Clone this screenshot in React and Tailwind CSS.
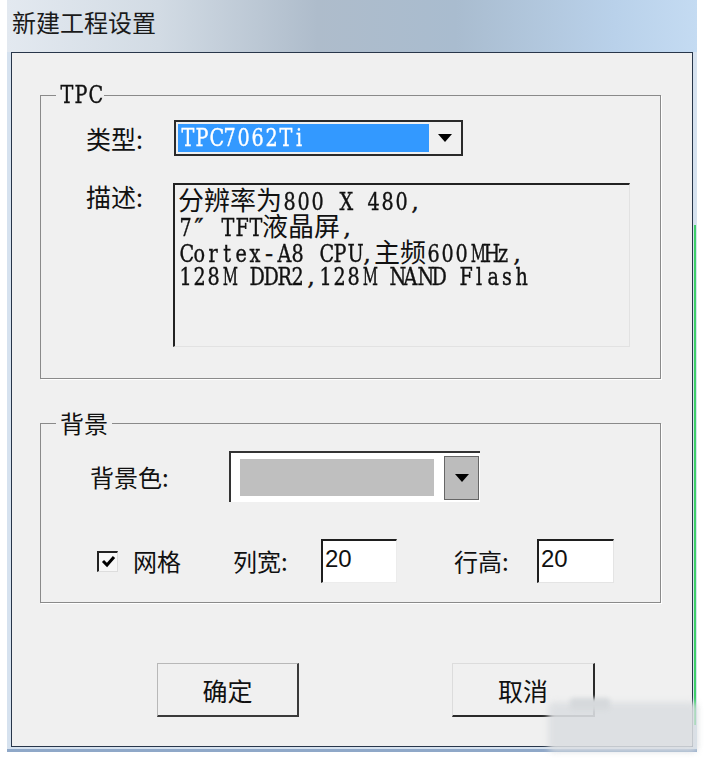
function Mono({ text }) {
  return text.split('').map((c, i) => {
    let cls = "inline-block w-[14px] text-center";
    if (c === 'M' || c === 'W' || c === 'm' || c === 'w') cls = "inline-block w-[14px] text-center scale-x-[0.62]";
    else if (/[A-Za-z0-9]/.test(c)) cls = "inline-block w-[14px] text-center scale-x-[0.8]";
    return (
      <span key={i} className={cls}>
        {c === ' ' ? '\u00a0' : c}
      </span>
    );
  });
}

function Cjk({ children }) {
  return <span className="text-[26px] leading-[26px] font-['Noto_Sans_CJK_SC'] [-webkit-text-stroke:0px]">{children}</span>;
}

export default function App() {
  const Tri = () => (
    <svg width="14" height="8" viewBox="0 0 14 8">
      <polygon points="0,0 14,0 7,8" fill="#000" />
    </svg>
  );
  return (
    <div className="w-[704px] h-[758px] bg-white relative overflow-hidden font-['Noto_Sans_CJK_SC'] text-[#111]">
      <div className="ml-[7px] w-[690px] h-[752px] bg-[#d6e2ef] flex flex-col border-b-[3px] border-[#8fa8c8]">
        <div className="h-[52px] shrink-0 pl-[5px] pt-[6px] bg-[linear-gradient(90deg,#e3e9f0_0%,#d2dbe4_22%,#aebccb_45%,#a9bccf_65%,#b9d1ea_88%,#c4dbf2_100%)]">
          <div className="text-[24px] leading-[32px] text-[#1a1a1a]">新建工程设置</div>
        </div>
        <div className="ml-[4px] w-[682px] h-[695px] shrink-0 border border-[#28364a] bg-[#f0f0f0] flex flex-col">
          {/* TPC group */}
          <fieldset className="ml-[28px] mt-[30px] w-[621px] border border-[#8a8a8a] p-0 m-0 shadow-[1px_1px_0_#fff]">
            <legend className="ml-[15px] px-[3px] leading-[24px] text-[24px] font-['DejaVu_Serif'] [-webkit-text-stroke:0.4px_#111]"><Mono text="TPC" /></legend>
            <div className="pl-[45px] pt-[13px] pb-[31px] flex flex-col">
              <div className="flex items-center">
                <div className="w-[88px] text-[25px] leading-[30px]">类型:</div>
                <div className="w-[289px] h-[36px] border-2 border-[#2a2a2a] bg-[#f0f0f0] p-[2px] flex gap-[1px]">
                  <div className="flex-1 bg-[#3399ff] text-white pl-[2px] flex items-center text-[24px] font-['DejaVu_Serif'] leading-[28px] [-webkit-text-stroke:0.4px_#fff]">
                    <div><Mono text="TPC7062Ti" /></div>
                  </div>
                  <div className="w-[29px] flex items-center justify-center"><Tri /></div>
                </div>
              </div>
              <div className="mt-[27px] flex items-start">
                <div className="w-[87px] text-[25px] leading-[26px]">描述:</div>
                <div className="w-[457px] h-[164px] border-t-2 border-l-2 border-r border-b border-t-[#222] border-l-[#222] border-r-[#e2e2e2] border-b-[#e2e2e2] bg-[#f0f0f0] pl-[3px] pt-[1px] font-['DejaVu_Serif'] text-[24px] leading-[26px] text-[#111] [-webkit-text-stroke:0.4px_#111]">
                  <div className="h-[26px] whitespace-nowrap"><Cjk>分辨率为</Cjk><Mono text="800 X 480," /></div>
                  <div className="h-[26px] whitespace-nowrap"><Mono text="7″ TFT" /><Cjk>液晶屏</Cjk><Mono text="," /></div>
                  <div className="h-[26px] whitespace-nowrap"><Mono text="Cortex-A8 CPU," /><Cjk>主频</Cjk><Mono text="600MHz," /></div>
                  <div className="h-[26px] whitespace-nowrap"><Mono text="128M DDR2,128M NAND Flash" /></div>
                </div>
              </div>
            </div>
          </fieldset>

          {/* 背景 group */}
          <fieldset className="ml-[28px] mt-[32px] w-[621px] border border-[#8a8a8a] p-0 m-0 shadow-[1px_1px_0_#fff]">
            <legend className="ml-[15px] px-[4px] leading-[24px] text-[24px]">背景</legend>
            <div className="pt-[16px] pb-[19px] flex flex-col">
              <div className="pl-[49px] flex items-center">
                <div className="w-[139px] text-[24px] leading-[30px]">背景色:</div>
                <div className="w-[251px] h-[51px] border-t-2 border-l-2 border-[#333] bg-white flex items-center">
                  <div className="ml-[9px] w-[194px] h-[37px] bg-[#bfbfbf]"></div>
                  <div className="ml-[10px] w-[35px] h-[44px] bg-[#bcbcbc] border border-[#666] flex items-center justify-center"><Tri /></div>
                </div>
              </div>
              <div className="mt-[37px] pl-[56px] h-[44px] flex items-center">
                <div className="w-[21px] h-[21px] border-t-2 border-l-2 border-r border-b border-t-[#222] border-l-[#222] border-r-[#ddd] border-b-[#ddd] bg-[#f7f7f7] flex items-center justify-center">
                  <svg width="15" height="13" viewBox="0 0 15 13">
                    <polyline points="2,6 6,10 13,2" fill="none" stroke="#000" strokeWidth="3" />
                  </svg>
                </div>
                <div className="ml-[15px] w-[100px] text-[24px] leading-[30px]">网格</div>
                <div className="w-[88px] text-[24px] leading-[30px]">列宽:</div>
                <div className="w-[76px] h-[44px] bg-white border-t-2 border-l-2 border-r border-b border-t-[#1e1e1e] border-l-[#1e1e1e] border-r-[#ececec] border-b-[#ececec] pl-[2px] pb-[6px] flex items-center text-[24px] font-['Liberation_Sans']">20</div>
                <div className="ml-[57px] w-[83px] text-[24px] leading-[30px]">行高:</div>
                <div className="w-[77px] h-[44px] bg-white border-t-2 border-l-2 border-r border-b border-t-[#1e1e1e] border-l-[#1e1e1e] border-r-[#e4e4e4] border-b-[#e4e4e4] pl-[2px] pb-[6px] flex items-center text-[24px] font-['Liberation_Sans']">20</div>
              </div>
            </div>
          </fieldset>

          {/* buttons */}
          <div className="mt-[60px] flex">
            <div className="ml-[145px] w-[142px] h-[54px] bg-[#f0f0f0] border-t border-l border-r-2 border-b-2 border-t-[#b8b8b8] border-l-[#b8b8b8] border-r-[#3a3a3a] border-b-[#3a3a3a] flex items-center justify-center text-[25px] leading-[30px]">确定</div>
            <div className="ml-[153px] w-[143px] h-[54px] bg-[#f0f0f0] border-t border-l border-r-2 border-b-2 border-t-[#dcdcdc] border-l-[#dcdcdc] border-r-[#2a2a2a] border-b-[#2a2a2a] flex items-center justify-center text-[25px] leading-[30px]">取消</div>
          </div>
        </div>
      </div>

      {/* green edge line */}
      <div className="absolute left-[694px] top-[225px] w-[2px] h-[500px] bg-[#3fcf6a]"></div>
      {/* blurred watermark */}
      <div className="absolute left-[548px] top-[702px] w-[150px] h-[50px] rounded-[6px] bg-[#dcdfe2] blur-[3px] opacity-90"></div>
      <div className="absolute left-[570px] top-[698px] w-[40px] h-[12px] rounded-[4px] bg-[#d6d9dc] blur-[2px]"></div>
    </div>
  );
}
